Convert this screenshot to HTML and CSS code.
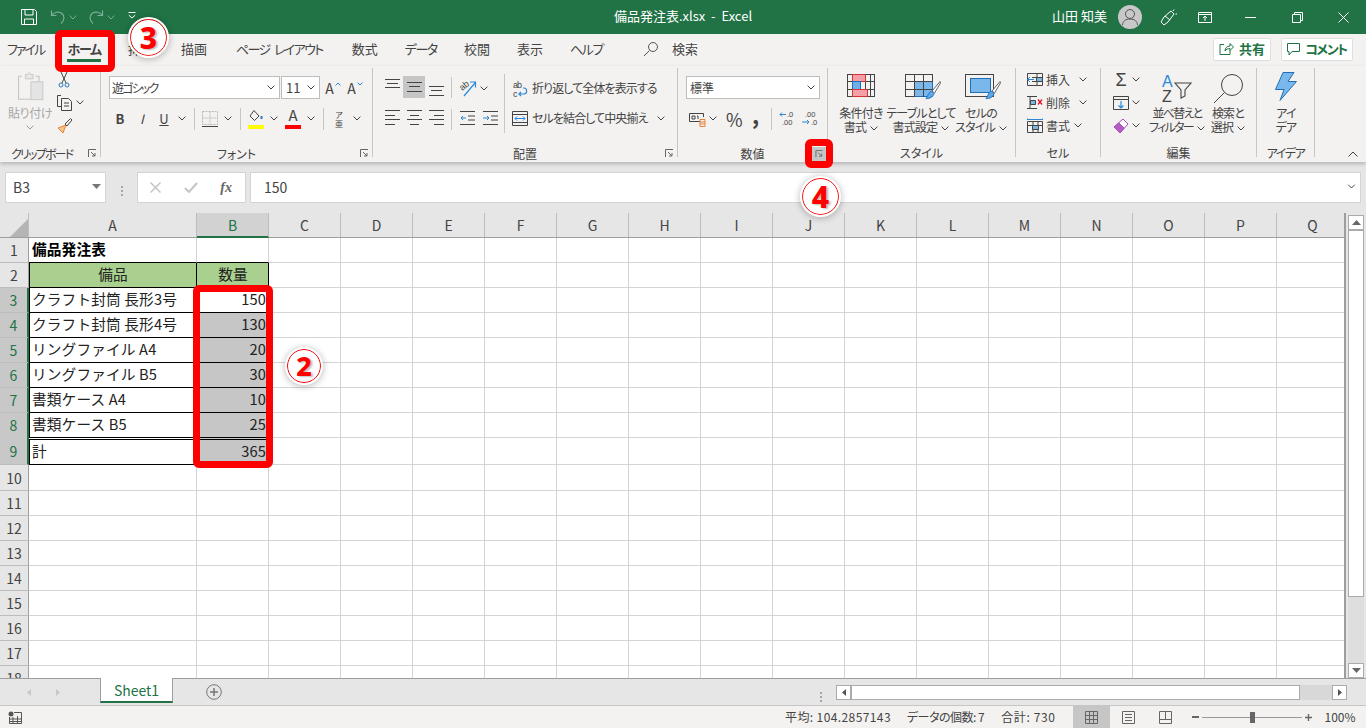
FILE: index.html
```html
<!DOCTYPE html>
<html lang="ja">
<head>
  <meta charset="UTF-8" />
  <title>備品発注表.xlsx - Excel</title>
  <link rel="stylesheet" href="styles.css">
</head>
<body>
  <svg class="defs" width="0" height="0">
    <symbol id="ch" viewBox="0 0 8 5"><path d="M.6.6 4 4 7.4.6" fill="none" stroke="#444"/></symbol>
    <symbol id="launch" viewBox="0 0 9 9"><path d="M.5 8V.5H8M3 3l4 4M7 4v3H4" fill="none" stroke="#666"/></symbol>
    <symbol id="brush" viewBox="0 0 16 20"><path d="M15 1.500 7 11l2.500 2L15.500 3z" fill="#fff" stroke="#666"/><path d="M6.500 11 9 13.500C8.500 16.500 5 19 .8 18.500 3 17 2.500 13 6.500 11z" fill="#5ea6e6" stroke="#2b79c2"/></symbol>
  </svg>

  <header class="titlebar">
    <div class="qat">
      <svg width="16" height="16" viewBox="0 0 16 16" fill="none" stroke="#fff"><path d="M.5.500h13l2 2v13H.5zM4 .500V6h8V.500M3.500 15.500V10h9v5.500"/></svg>
      <svg class="undo" width="16" height="16" viewBox="0 0 16 16" fill="none" stroke="#7fae98" stroke-width="1.200"><path d="M1.500 1.500v5h5M1.500 6.500C4 3 9 2 12 4.500s2.500 7-1 10"/></svg>
      <svg class="dimch" width="8" height="5" viewBox="0 0 8 5" fill="none" stroke="#7fae98"><path d="M.6.6 4 4 7.400.6"/></svg>
      <svg class="redo" width="16" height="16" viewBox="0 0 16 16" fill="none" stroke="#7fae98" stroke-width="1.200"><path d="M14.500 1.500v5h-5M14.500 6.500C12 3 7 2 4 4.500s-2.500 7 1 10"/></svg>
      <svg class="dimch" width="8" height="5" viewBox="0 0 8 5" fill="none" stroke="#7fae98"><path d="M.6.6 4 4 7.400.6"/></svg>
      <svg class="more" width="8" height="7" viewBox="0 0 8 7" fill="none" stroke="#fff"><path d="M.5.500h7M.8 3.200 4 6l3.200-2.800"/></svg>
    </div>
    <div class="doc-title">備品発注表.xlsx&nbsp; -&nbsp; Excel</div>
    <div class="winctl">
      <span class="user">山田 知美</span>
      <span class="avatar">
        <svg width="24" height="24" viewBox="0 0 24 24" fill="none" stroke="#555"><circle cx="12" cy="9" r="4.500"/><path d="M4.500 20c.5-4 3-6 7.500-6s7 2 7.500 6"/></svg>
      </span>
      <span class="ctl ctl-brush">
        <svg width="17" height="17" viewBox="0 0 17 17" fill="none" stroke="#fff"><path d="M11 2 14 5 8 13 4 16 1 13 4 8zM5 7l5 4M13 2l1-1.500M15.500 5H17"/></svg>
      </span>
      <span class="ctl ctl-disp">
        <svg width="14" height="11" viewBox="0 0 14 11" fill="none" stroke="#fff"><path d="M.5.500h13v10H.5zM.5 2.500h13M7 9V4.500M5 6l2-2 2 2"/></svg>
      </span>
      <span class="ctl ctl-win">
        <svg width="11" height="1" viewBox="0 0 11 1"><path d="M0 .5h11" stroke="#fff"/></svg>
      </span>
      <span class="ctl ctl-win ctl-max">
        <svg width="11" height="11" viewBox="0 0 11 11" fill="none" stroke="#fff"><path d="M.5 2.500h8v8h-8zM2.500 2.500v-2h8v8h-2"/></svg>
      </span>
      <span class="ctl ctl-win ctl-max">
        <svg width="11" height="11" viewBox="0 0 11 11" fill="none" stroke="#fff"><path d="m.5.500 10 10M10.500.5l-10 10"/></svg>
      </span>
    </div>
  </header>

  <nav class="tabs">
    <span class="tab kana tab-file">ファイル</span>
    <span class="tab tab-home">ホーム</span>
    <span class="tab">挿入</span>
    <span class="tab">描画</span>
    <span class="tab kana tab-wide tab-page">ページ レイアウト</span>
    <span class="tab tab-wide">数式</span>
    <span class="tab kana">データ</span>
    <span class="tab">校閲</span>
    <span class="tab">表示</span>
    <span class="tab kana">ヘルプ</span>
    <span class="search">
      <svg width="16" height="16" viewBox="0 0 16 16" fill="none" stroke="#555"><circle cx="10" cy="6" r="4.500"/><path d="M6.500 9.500 1 15"/></svg>
      <span class="search-text">検索</span>
    </span>
    <span class="tab-buttons">
      <span class="pill pill-share">
        <svg width="15" height="14" viewBox="0 0 15 14" fill="none" stroke="#217346"><path d="M5 2.500H1v10h10V8M6 9c0-3 2-5 5-5V1.500L14.500 5 11 8.500V6.500C8.500 6.500 7 7.500 6 9z"/></svg>
        共有
      </span>
      <span class="pill pill-comment">
        <svg width="13" height="13" viewBox="0 0 13 13" fill="none" stroke="#217346"><path d="M.5.500h12v8H5L2 12V8.500H.5z"/></svg>
        <span class="kana">コメント</span>
      </span>
    </span>
  </nav>

  <section class="ribbon">
    <div class="group g-clip">
      <div class="body">
        <div class="paste">
          <svg width="27" height="29" viewBox="0 0 30 34" fill="none" stroke="#c4c4c4"><path d="M5 5H1v27h14M21 5h4v6" stroke-width="1.300"/><path d="M9 3h2.500c0-2.500 4-2.500 4 0H18v5H9z" fill="#e6e6e6"/><rect x="15.500" y="11.500" width="14" height="21" fill="#e4e4e4"/></svg>
          <span class="paste-text">貼り付け</span>
          <svg class="pale" width="8" height="5"><use href="#ch"/></svg>
        </div>
        <div class="stack">
          <div class="small">
            <svg width="14" height="16" viewBox="0 0 14 16" fill="none" stroke="#444"><path d="M4 0l5 11M10 0 5 11"/><circle cx="4" cy="13" r="2" stroke="#2b79c2"/><circle cx="10" cy="13" r="2" stroke="#2b79c2"/></svg>
          </div>
          <div class="small">
            <svg width="16" height="16" viewBox="0 0 16 16" fill="none" stroke="#444"><path d="M4 .500H.5v11H5M4.500 3.500h7l3 3v9h-10zM7 8h5M7 11h5"/></svg>
            <svg width="8" height="5"><use href="#ch"/></svg>
          </div>
          <div class="small">
            <svg width="16" height="16" viewBox="0 0 16 16" fill="none"><path d="M9 7 1 10l5 5 3-8z" fill="#f7c38c" stroke="#e8833a"/><path d="M8 6l2 2 5-6-1.500-1.500z" stroke="#444"/></svg>
          </div>
        </div>
      </div>
      <div class="label"><span></span><span class="clip-text">クリップボード</span><svg class="launch" width="9" height="9"><use href="#launch"/></svg></div>
    </div>

    <div class="group g-font">
      <div class="body col">
        <div class="line">
          <span class="select font-name"><span class="kana-tight">遊ゴシック</span><svg width="8" height="5"><use href="#ch"/></svg></span>
          <span class="select font-size">11<svg width="8" height="5"><use href="#ch"/></svg></span>
          <span class="ib ib-a">A<svg class="caret" width="6" height="4" viewBox="0 0 6 4" fill="none" stroke="#2b88d8"><path d="M.5 3.500 3 1l2.500 2.500"/></svg></span>
          <span class="ib ib-a">A<svg class="caret" width="6" height="4" viewBox="0 0 6 4" fill="none" stroke="#2b88d8"><path d="M.5.500 3 3 5.500.5"/></svg></span>
        </div>
        <div class="line">
          <span class="ib ib-b">B</span>
          <span class="ib ib-i">I</span>
          <span class="ib ib-u">U</span>
          <span class="cs"><svg width="8" height="5"><use href="#ch"/></svg></span>
          <span class="sep sep-font"></span>
          <span class="ib">
            <svg width="16" height="16" viewBox="0 0 16 16" fill="none" stroke="#bbb" stroke-dasharray="2 1"><path d="M.5.500h15v13H.5zM8 .500v13M.5 7h15"/><path d="M0 15.500h16" stroke="#444" stroke-dasharray="none"/></svg>
          </span>
          <span class="cs"><svg width="8" height="5"><use href="#ch"/></svg></span>
          <span class="sep sep-font"></span>
          <span class="ib ib-fill">
            <svg width="14" height="12" viewBox="0 0 14 12" fill="none" stroke="#444"><path d="m5 .500 5 5.500-4.500 4.500L1 6z"/><path d="M12.500 6v3" stroke="#2b79c2" stroke-width="2"/></svg>
            <i class="bar bar-yellow"></i>
          </span>
          <span class="cs cs-tight"><svg width="8" height="5"><use href="#ch"/></svg></span>
          <span class="ib ib-color">A<i class="bar bar-red"></i></span>
          <span class="cs"><svg width="8" height="5"><use href="#ch"/></svg></span>
          <span class="sep sep-font"></span>
          <span class="ib ib-ph"><span>ア</span><span>亜</span></span>
          <span class="cs"><svg width="8" height="5"><use href="#ch"/></svg></span>
        </div>
      </div>
      <div class="label"><span></span><span>フォント</span><svg class="launch" width="9" height="9"><use href="#launch"/></svg></div>
    </div>

    <div class="group g-align">
      <div class="body al-body">
        <div class="al-col al-icons">
          <span class="ib"><svg width="15" height="22" viewBox="0 0 15 22" stroke="#444"><path d="M0 3.500h15M2 7.500h11M0 11.500h15"/></svg></span>
          <span class="ib ib-on"><svg width="15" height="22" viewBox="0 0 15 22" stroke="#444"><path d="M0 6.500h15M2 10.500h11M0 15.500h15"/></svg></span>
          <span class="ib"><svg width="15" height="22" viewBox="0 0 15 22" stroke="#444"><path d="M0 10.500h15M2 14.500h11M0 19.500h15"/></svg></span>
          <span class="ib"><svg width="15" height="15" viewBox="0 0 15 15" stroke="#444"><path d="M0 .5h15M0 5.500h10M0 9.500h15M0 14.500h10"/></svg></span>
          <span class="ib"><svg width="15" height="15" viewBox="0 0 15 15" stroke="#444"><path d="M0 .5h15M3 5.500h9M0 9.500h15M3 14.500h9"/></svg></span>
          <span class="ib"><svg width="15" height="15" viewBox="0 0 15 15" stroke="#444"><path d="M0 .5h15M5 5.500h10M0 9.500h15M5 14.500h10"/></svg></span>
        </div>
        <span class="sep-split"></span>
        <div class="al-col al-mid">
          <span class="rowline">
            <svg class="orient" width="18" height="18" viewBox="0 0 18 18" fill="none"><text x="1" y="10" transform="rotate(-40 5 8)" class="svgt">ab</text><path d="M5 17 16 4M11 3h5.500v5.500" stroke="#2b88d8" stroke-width="1.200"/></svg>
            <span class="cs"><svg width="8" height="5"><use href="#ch"/></svg></span>
          </span>
          <span class="rowline rowline-ind">
            <svg width="15" height="14" viewBox="0 0 15 14" fill="none" stroke="#444"><path d="M0 .500h15M8 5h7M8 9h7M0 13.500h15"/><path d="M6 7H1M3 5 1 7l2 2" stroke="#2b88d8"/></svg>
            <svg width="15" height="14" viewBox="0 0 15 14" fill="none" stroke="#444"><path d="M0 .500h15M8 5h7M8 9h7M0 13.500h15"/><path d="M0 7h6M4 5l2 2-2 2" stroke="#2b88d8"/></svg>
          </span>
        </div>
        <span class="sep sep-taller"></span>
        <div class="al-col al-wide">
          <span class="rowline rl-text">
            <svg class="wrap-ic" width="16" height="19" viewBox="0 0 16 19" fill="none"><text x="1" y="9" class="svgt">ab</text><text x="1" y="18" class="svgt">c</text><path d="M7 15h5c3.500 0 3.500-6 0-6h-1M9 13l-2 2 2 2" stroke="#2b88d8" stroke-width="1.200"/></svg>
            折り返して全体を表示する
          </span>
          <span class="rowline rl-text">
            <svg width="16" height="15" viewBox="0 0 16 15" fill="none" stroke="#444"><path d="M.5.500h15v14H.5zM.5 3.500h15M.5 11.500h15"/><path d="M3 7.500h10M5 5.500l-2 2 2 2M11 5.500l2 2-2 2" stroke="#2b88d8"/></svg>
            セルを結合して中央揃え
            <svg class="rl-ch" width="8" height="5"><use href="#ch"/></svg>
          </span>
        </div>
      </div>
      <div class="label"><span></span><span>配置</span><svg class="launch" width="9" height="9"><use href="#launch"/></svg></div>
    </div>

    <div class="group g-num">
      <div class="body col">
        <div class="line">
          <span class="select num-format">標準<svg width="8" height="5"><use href="#ch"/></svg></span>
        </div>
        <div class="line num-line">
          <svg width="17" height="16" viewBox="0 0 17 16" fill="none" stroke="#444"><path d="M.5 2.500h14V6M11 10.500H.5v-8M3 5h3v3H3zM8 5h1v3"/><path d="M11 8.500h5v7h-5zM11 11h5M11 13h5" stroke="#e8833a"/></svg>
          <span class="cs"><svg width="8" height="5"><use href="#ch"/></svg></span>
          <span class="pct">%</span>
          <span class="comma">,</span>
          <span class="sep sep-num"></span>
          <svg width="18" height="17" viewBox="0 0 18 17" fill="none"><path d="M7 4.500H1M3 2.500l-2 2 2 2" stroke="#2b88d8"/><text x="8" y="7" class="svgt svgt-s">.0</text><text x="3" y="15.400" class="svgt svgt-s">.00</text></svg>
          <svg class="dec2" width="19" height="17" viewBox="0 0 19 17" fill="none"><text x="4" y="7" class="svgt svgt-s">.00</text><path d="M1 12h7M6 10l2 2-2 2" stroke="#2b88d8"/><text x="10" y="15.400" class="svgt svgt-s">.0</text></svg>
        </div>
      </div>
      <div class="label"><span></span><span>数値</span><svg class="launch launch-on" width="15" height="14"><use href="#launch"/></svg></div>
    </div>

    <div class="group g-style">
      <div class="body big-row">
        <div class="big big-1">
          <span class="big-ic">
            <svg width="28" height="23" viewBox="0 0 28 23" fill="none" stroke="#444"><rect x=".5" y=".5" width="27" height="22"/><path d="M5.500 0v23M18.500 0v23M23.500 0v23M0 7.500h28M0 15.500h28"/><rect x="5.500" y=".5" width="13" height="7" fill="#f4a0a6" stroke="#d13438"/><rect x="5.500" y="7.500" width="8" height="8" fill="#6db1e8" stroke="#1e6fb8"/><rect x="5.500" y="15.500" width="15" height="7" fill="#f4a0a6" stroke="#d13438"/></svg>
          </span>
          <span>条件付き</span><span>書式<svg class="inl" width="8" height="5"><use href="#ch"/></svg></span>
        </div>
        <div class="big big-2">
          <span class="big-ic">
            <svg class="tbl" width="30" height="26" viewBox="0 0 30 26" fill="none" stroke="#444"><rect x=".5" y=".5" width="27" height="22"/><rect x="9.500" y="7.500" width="18" height="15" fill="#7ab8ec" stroke="#1e6fb8"/><path d="M0 7.500h28M0 15.500h28M9.500 0v23M18.500 0v23"/></svg>
            <svg class="brush" width="16" height="20"><use href="#brush"/></svg>
          </span>
          <span>テーブルとして</span><span>書式設定<svg class="inl" width="8" height="5"><use href="#ch"/></svg></span>
        </div>
        <div class="big big-3">
          <span class="big-ic">
            <svg class="tbl" width="30" height="26" viewBox="0 0 30 26" fill="none" stroke="#444"><rect x=".5" y=".5" width="28" height="22"/><rect x="5.500" y="4.500" width="20" height="14" fill="#7ab8ec" stroke="#1e6fb8"/></svg>
            <svg class="brush" width="16" height="20"><use href="#brush"/></svg>
          </span>
          <span>セルの</span><span>スタイル<svg class="inl" width="8" height="5"><use href="#ch"/></svg></span>
        </div>
      </div>
      <div class="label label-plain">スタイル</div>
    </div>

    <div class="group g-cells">
      <div class="body stack cell-stack">
        <div class="small">
          <svg width="16" height="13" viewBox="0 0 16 13" fill="none" stroke="#444"><path d="M.5.500h15v12H.5zM5 4.500h11M5 8.500h11M10 0v13"/><path d="M9.500 4.500h6v4h-6z" fill="#7ab8ec"/><path d="M7 6.500H1M3 4l-2.500 2.500L3 9" stroke="#2b88d8"/></svg>
          <span class="small-text">挿入</span><svg width="8" height="5"><use href="#ch"/></svg>
        </div>
        <div class="small">
          <svg width="16" height="13" viewBox="0 0 16 13" fill="none" stroke="#444"><path d="M0 .5h10M0 12.500h10M3 0v13"/><path d="M3.500 4.500h5v4h-5z" fill="#7ab8ec"/><path d="m11 3.500 4 5M15 3.500l-4 5" stroke="#e81123" stroke-width="1.300"/></svg>
          <span class="small-text">削除</span><svg width="8" height="5"><use href="#ch"/></svg>
        </div>
        <div class="small">
          <svg width="16" height="15" viewBox="0 0 16 15" fill="none" stroke="#444"><path d="M.5 3.500h15v11H.5zM6 3v12M11 3v12M0 7.500h16"/><path d="M5.500 7.500h6v4h-6z" fill="#7ab8ec"/><path d="M.5.500v1.500M.5 1.500h15M15.500.5v1.500" stroke="#2b88d8"/></svg>
          <span class="small-text">書式</span><svg class="ch-near" width="8" height="5"><use href="#ch"/></svg>
        </div>
      </div>
      <div class="label label-plain">セル</div>
    </div>

    <div class="group g-edit">
      <div class="body edit-body">
        <div class="stack edit-stack">
          <div class="small"><span class="sigma">Σ</span><svg width="8" height="5"><use href="#ch"/></svg></div>
          <div class="small">
            <svg width="16" height="14" viewBox="0 0 16 14" fill="none" stroke="#444"><path d="M.5.500h15v13H.5zM.5 3.500h15"/><path d="M8 5v7M5.500 9.500 8 12l2.500-2.500" stroke="#2b88d8" stroke-width="1.200"/></svg>
            <svg width="8" height="5"><use href="#ch"/></svg>
          </div>
          <div class="small">
            <svg width="16" height="16" viewBox="0 0 16 16" fill="none" stroke="#a74db8"><path d="M10 1 15 6 7 15 1 9z" fill="#fff"/><path d="M6 5 1 9l6 6 4-5z" fill="#b45cc4"/></svg>
            <svg width="8" height="5"><use href="#ch"/></svg>
          </div>
        </div>
        <div class="big big-sort">
          <span class="big-ic">
            <svg width="30" height="30" viewBox="0 0 30 30" fill="none"><text x="0" y="13" class="az az-a">A</text><text x="0" y="28" class="az">Z</text><path d="M13 9h16l-6 7v6l-4 2v-8z" stroke="#444" stroke-width="1.100"/></svg>
          </span>
          <span>並べ替えと</span><span>フィルター<svg class="inl" width="8" height="5"><use href="#ch"/></svg></span>
        </div>
        <div class="big big-find">
          <span class="big-ic">
            <svg width="30" height="30" viewBox="0 0 30 30" fill="none" stroke="#444"><circle cx="19" cy="11" r="10.500"/><path d="M11.500 18.500 1 29"/></svg>
          </span>
          <span>検索と</span><span>選択<svg class="inl" width="8" height="5"><use href="#ch"/></svg></span>
        </div>
      </div>
      <div class="label label-plain">編集</div>
    </div>

    <div class="group g-idea">
      <div class="body big-row">
        <div class="big big-idea">
          <span class="big-ic">
            <svg width="22" height="29" viewBox="0 0 22 29" fill="#7ab8ec" stroke="#1e6fb8"><path d="M8 .500h11L13 9.500h8.500L5 28.500l4-11H.5z"/></svg>
          </span>
          <span>アイ</span><span>デア</span>
        </div>
      </div>
      <div class="label label-plain idea-label">アイデア</div>
    </div>

    <div class="collapse">
      <svg width="10" height="6" viewBox="0 0 10 6" fill="none" stroke="#444"><path d="M.5 5.500 5 1l4.500 4.500"/></svg>
    </div>
  </section>

  <section class="formula">
    <div class="namebox">B3<svg width="9" height="5" viewBox="0 0 9 5"><path d="M0 0h9L4.500 5z" fill="#777"/></svg></div>
    <div class="dots"><i></i><i></i><i></i></div>
    <div class="fxbox">
      <svg width="11" height="11" viewBox="0 0 11 11" stroke="#c4c4c4" stroke-width="1.500" fill="none"><path d="m.5.500 10 10M10.500.5l-10 10"/></svg>
      <svg width="14" height="11" viewBox="0 0 14 11" stroke="#c4c4c4" stroke-width="2" fill="none"><path d="m1 6 4 4 8-9"/></svg>
      <span class="fx">fx</span>
    </div>
    <div class="fxinput">150<svg width="9" height="5" viewBox="0 0 8 5"><use href="#ch"/></svg></div>
  </section>

  <section class="sheet">
    <div class="grid">
      <div class="colheads">
        <div class="corner"><svg width="18" height="18" viewBox="0 0 18 18"><path d="M18 0v18H0z" fill="#b4b4b4"/></svg></div>
        <div class="ch-a">A</div><div class="ch-b">B</div>
        <div>C</div><div>D</div><div>E</div><div>F</div><div>G</div><div>H</div><div>I</div><div>J</div><div>K</div><div>L</div><div>M</div><div>N</div><div>O</div><div>P</div><div>Q</div>
      </div>

      <div class="row"><div class="rh">1</div><div class="c ub title-cell">備品発注表</div><div class="c ub"></div><div class="rest"></div></div>
      <div class="row"><div class="rh">2</div><div class="c bd head-cell">備品</div><div class="c bd head-cell">数量</div><div class="rest"></div></div>
      <div class="row"><div class="rh on">3</div><div class="c bd">クラフト封筒 長形3号</div><div class="c bd num">150</div><div class="rest"></div></div>
      <div class="row"><div class="rh on">4</div><div class="c bd">クラフト封筒 長形4号</div><div class="c bd num sel">130</div><div class="rest"></div></div>
      <div class="row"><div class="rh on">5</div><div class="c bd">リングファイル A4</div><div class="c bd num sel">20</div><div class="rest"></div></div>
      <div class="row"><div class="rh on">6</div><div class="c bd">リングファイル B5</div><div class="c bd num sel">30</div><div class="rest"></div></div>
      <div class="row"><div class="rh on">7</div><div class="c bd">書類ケース A4</div><div class="c bd num sel">10</div><div class="rest"></div></div>
      <div class="row"><div class="rh on">8</div><div class="c bd">書類ケース B5</div><div class="c bd num sel">25</div><div class="rest"></div></div>
      <div class="row row-total"><div class="rh on">9</div><div class="c bd tot">計</div><div class="c bd tot num sel">365</div><div class="rest"></div></div>
      <div class="row row-10"><div class="rh">10</div><div class="c"></div><div class="c"></div><div class="rest"></div></div>
      <div class="row"><div class="rh">11</div><div class="c"></div><div class="c"></div><div class="rest"></div></div>
      <div class="row"><div class="rh">12</div><div class="c"></div><div class="c"></div><div class="rest"></div></div>
      <div class="row"><div class="rh">13</div><div class="c"></div><div class="c"></div><div class="rest"></div></div>
      <div class="row"><div class="rh">14</div><div class="c"></div><div class="c"></div><div class="rest"></div></div>
      <div class="row"><div class="rh">15</div><div class="c"></div><div class="c"></div><div class="rest"></div></div>
      <div class="row"><div class="rh">16</div><div class="c"></div><div class="c"></div><div class="rest"></div></div>
      <div class="row"><div class="rh">17</div><div class="c"></div><div class="c"></div><div class="rest"></div></div>
      <div class="row"><div class="rh">18</div><div class="c"></div><div class="c"></div><div class="rest"></div></div>
    </div>
    <div class="vscroll">
      <span class="sbtn"><svg width="9" height="5" viewBox="0 0 9 5"><path d="M0 5h9L4.500 0z" fill="#666"/></svg></span>
      <span class="vthumb"></span>
      <span class="vtrack"></span>
      <span class="sbtn"><svg width="9" height="5" viewBox="0 0 9 5"><path d="M0 0h9L4.500 5z" fill="#666"/></svg></span>
    </div>
  </section>

  <section class="sheetbar">
    <span class="nav-arrows">
      <svg width="4" height="7" viewBox="0 0 4 7"><path d="M4 0v7L0 3.500z" fill="#c8c8c8"/></svg>
      <svg width="4" height="7" viewBox="0 0 4 7"><path d="M0 0v7l4-3.500z" fill="#c8c8c8"/></svg>
    </span>
    <span class="sheet-tab">Sheet1</span>
    <span class="add-sheet">
      <svg width="16" height="16" viewBox="0 0 16 16" fill="none" stroke="#777"><circle cx="8" cy="8" r="7.300"/><path d="M8 4v8M4 8h8" stroke-width="1.500"/></svg>
    </span>
    <div class="dots dots-h"><i></i><i></i><i></i></div>
    <div class="hscroll">
      <span class="sbtn sbtn-h"><svg width="4" height="7" viewBox="0 0 4 7"><path d="M4 0v7L0 3.500z" fill="#555"/></svg></span>
      <span class="hthumb"></span>
      <span class="htrack"></span>
      <span class="sbtn sbtn-h"><svg width="4" height="7" viewBox="0 0 4 7"><path d="M0 0v7l4-3.500z" fill="#555"/></svg></span>
    </div>
  </section>

  <footer class="status">
    <svg class="macro" width="14" height="13" viewBox="0 0 14 13" fill="none"><circle cx="3" cy="3" r="2.500" fill="#555"/><path d="M6 1.500h7.500v11H1.500V6M1.500 8h12M1.500 10.500h12M5 6v6.500M9.500 5v7.500" stroke="#555"/></svg>
    <span class="stat stat-avg">平均: 104.2857143</span>
    <span class="stat stat-count">データの個数: 7</span>
    <span class="stat stat-sum">合計: 730</span>
    <span class="view view-on">
      <svg width="13" height="13" viewBox="0 0 13 13" fill="none" stroke="#666"><path d="M.5.500h12v12H.5zM4.500 0v13M8.500 0v13M0 4.500h13M0 8.500h13"/></svg>
    </span>
    <span class="view">
      <svg width="13" height="13" viewBox="0 0 13 13" fill="none" stroke="#666"><path d="M.5.500h12v12H.5zM3 3.500h7M3 6.500h7M3 9.500h7"/></svg>
    </span>
    <span class="view">
      <svg width="13" height="13" viewBox="0 0 13 13" fill="none" stroke="#666"><path d="M.5.500h12v12H.5zM6.500 0v8.500M.5 8.500h12"/></svg>
    </span>
    <span class="zoom">
      <i class="zm-minus"></i>
      <span class="zm-track"><i class="zm-thumb"></i></span>
      <svg width="7" height="7" viewBox="0 0 7 7" stroke="#666" stroke-width="1.400"><path d="M3.500 0v7M0 3.500h7"/></svg>
    </span>
    <span class="stat stat-zoom">100%</span>
  </footer>

  <!-- 赤枠と丸数字はスクリーンショットに載せた注釈 -->
  <div class="mark mark-home"></div>
  <div class="mark mark-launch"></div>
  <div class="mark mark-range"></div>
  <div class="num-badge badge-3">3</div>
  <div class="num-badge badge-2">2</div>
  <div class="num-badge badge-4">4</div>
</body>
</html>
```

FILE: styles.css
```css
* {
  box-sizing: border-box;
}

body {
  position: relative;
  margin: 0;
  width: 1366px;
  height: 728px;
  overflow: hidden;
  display: flex;
  flex-direction: column;
  background-color: #e6e6e6;
  color: #444;
  font-family: "Noto Sans CJK JP", sans-serif;
  font-size: 12px;
  font-feature-settings: "palt";
  line-height: 14px;
}

.defs {
  position: absolute;
}

svg {
  display: block;
  flex: none;
}

/* title bar */
.titlebar {
  flex: none;
  height: 34px;
  display: grid;
  grid-template-columns: 1fr auto 1fr;
  align-items: center;
  background-color: #217346;
  color: #fff;
}

.qat {
  display: flex;
  align-items: center;
  padding-left: 21px;
}

.undo {
  margin-left: 13px;
}

.redo {
  margin-left: 11px;
}

.dimch {
  margin-left: 3px;
}

.more {
  margin: -3px 0 0 13px;
}

.doc-title {
  margin-top: -3px;
  font-size: 13px;
  font-feature-settings: normal;
}

.winctl {
  display: flex;
  align-items: center;
  justify-content: flex-end;
}

.user {
  margin-top: -3px;
  font-size: 13px;
  margin-right: 11px;
}

.avatar {
  width: 24px;
  height: 24px;
  border-radius: 50%;
  background-color: #c8c8c8;
  margin-right: 10px;
}

.ctl {
  display: flex;
  justify-content: center;
  width: 32px;
}

.ctl-disp {
  width: 42px;
}

.ctl-win {
  width: 48px;
}

.ctl-max {
  width: 46px;
}

/* tabs */
.tabs {
  flex: none;
  height: 32px;
  display: flex;
  align-items: center;
  gap: 27px;
  padding: 0 13px 2px 7px;
  background-color: #f3f2f1;
  font-size: 13px;
}

.kana {
  letter-spacing: -1.4px;
}

.tab-file {
  letter-spacing: -1.9px;
}

.tab-home {
  position: relative;
  margin-left: -4px;
  font-weight: 700;
  letter-spacing: -1.2px;
}

.tab-home::after {
  content: "";
  position: absolute;
  left: 0;
  right: 0;
  top: 17px;
  height: 3px;
  background-color: #217346;
}

.tab-wide {
  margin-left: 2px;
}

.tab-page {
  letter-spacing: -1.6px;
  word-spacing: 3px;
}

.search {
  display: flex;
  align-items: center;
  gap: 13px;
  margin-left: 13px;
}

.search-text {
  background-color: #f9f8f7;
}

.tab-buttons {
  display: flex;
  gap: 10px;
  margin-left: auto;
}

.pill {
  height: 23px;
  display: flex;
  align-items: center;
  justify-content: center;
  gap: 5px;
  border: 1px solid #e1dfdd;
  border-radius: 2px;
  background-color: #fff;
  color: #217346;
  font-weight: 700;
}

.pill-share {
  width: 58px;
}

.pill-comment {
  width: 72px;
}

/* ribbon */
.ribbon {
  position: relative;
  z-index: 1;
  flex: none;
  height: 96px;
  display: flex;
  padding: 2px 0 5px;
  background-color: #f3f2f1;
  box-shadow: 0 2px 4px rgba(0, 0, 0, .22);
}

.group {
  flex: none;
  display: flex;
  flex-direction: column;
  border-right: 1px solid #c8c6c4;
}

.g-clip { width: 101px; }
.g-font { width: 272px; }
.g-align { width: 305px; }
.g-num { width: 150px; }
.g-style { width: 188px; }
.g-cells { width: 85px; }
.g-edit { width: 156px; }
.g-idea { width: 58px; }

.body {
  flex: 1;
  display: flex;
  min-height: 0;
}

.col {
  flex-direction: column;
  gap: 8px;
  padding: 8px 0 0 8px;
}

.line {
  display: flex;
  align-items: center;
  height: 23px;
}

.label {
  flex: none;
  height: 15px;
  margin-bottom: -4px;
  display: grid;
  grid-template-columns: 1fr auto 1fr;
  align-items: center;
  text-align: center;
  white-space: nowrap;
}

.label-plain {
  display: block;
}

.g-clip .label {
  grid-template-columns: 11px auto 1fr;
}

.clip-text {
  letter-spacing: -1.8px;
}

.idea-label {
  letter-spacing: -1.5px;
}

.launch {
  justify-self: end;
  margin-right: 3px;
}

.launch-on {
  margin-right: 0;
  padding: 3px;
  background-color: #c6c6c6;
}

.ib {
  position: relative;
  width: 22px;
  height: 22px;
  flex: none;
  display: flex;
  align-items: center;
  justify-content: center;
}

.ib-on {
  background-color: #c6c6c6;
}

.cs {
  width: 14px;
  flex: none;
  display: flex;
  justify-content: center;
}

.cs-tight {
  margin-right: 1px;
}

.sep {
  flex: none;
  width: 1px;
  background-color: #c8c6c4;
}

.sep-font {
  height: 22px;
  margin: 0 4px 0 5px;
}

.select {
  height: 23px;
  display: flex;
  align-items: center;
  justify-content: space-between;
  padding: 0 4px;
  background-color: #fff;
  border: 1px solid #bdbdbd;
  flex: none;
}

.font-name {
  width: 171px;
  margin-right: 1px;
  padding-left: 2px;
}

.kana-tight {
  letter-spacing: -1.8px;
}

.font-size {
  width: 39px;
  font-size: 13px;
}

.num-format {
  width: 134px;
  padding-left: 3px;
}

.ib-a {
  font-size: 14px;
}

.font-size + .ib-a {
  margin-left: 2px;
}

.caret {
  margin: -8px 0 0 1px;
}

.ib-b {
  font-weight: 700;
  font-size: 13px;
}

.ib-i {
  font-style: italic;
  font-size: 13px;
}

.ib-u {
  font-size: 13px;
  text-decoration: underline;
}

.bar {
  position: absolute;
  left: 3px;
  bottom: 1px;
  width: 16px;
  height: 4px;
}

.bar-yellow { background-color: #ffff00; }
.bar-red { background-color: #ff0000; }

.ib-fill {
  align-items: flex-start;
  padding-top: 2px;
}

.ib-color {
  align-items: flex-start;
  font-size: 15px;
}

.ib-ph {
  flex-direction: column;
  line-height: 9px;
  font-size: 8px;
}

.svgt {
  fill: #444;
  stroke: none;
  font-family: "Liberation Sans", sans-serif;
  font-size: 9px;
}

.svgt-s {
  font-size: 7.5px;
}

/* clipboard */
.paste {
  width: 44px;
  margin-left: 8px;
  padding-top: 4px;
  display: flex;
  flex-direction: column;
  align-items: center;
  color: #a6a6a6;
  white-space: nowrap;
}

.paste-text {
  margin: 5px 0;
  letter-spacing: -.4px;
}

.pale {
  opacity: .5;
}

.stack {
  display: flex;
  flex-direction: column;
  padding-left: 5px;
}

.small {
  height: 23px;
  display: flex;
  align-items: center;
  gap: 3px;
  white-space: nowrap;
}

/* alignment */
.al-body {
  padding: 8px 0 0 8px;
  align-items: flex-start;
}

.al-col {
  display: flex;
  flex: none;
}

.al-icons {
  width: 66px;
  flex-wrap: wrap;
  row-gap: 8px;
}

.sep-split {
  flex: none;
  width: 1px;
  height: 54px;
  margin: 0 6px 0 4px;
  background:
    linear-gradient(#c8c6c4, #c8c6c4) 0 1px / 1px 21px no-repeat,
    linear-gradient(#c8c6c4, #c8c6c4) 0 33px / 1px 21px no-repeat;
}

.al-mid {
  width: 46px;
  flex-direction: column;
  gap: 10px;
  padding-top: 2px;
}

.rowline {
  display: flex;
  align-items: center;
  height: 20px;
}

.orient {
  margin-left: 1px;
}

.rowline-ind {
  gap: 8px;
  margin-left: 2px;
}

.sep-taller {
  height: 59px;
  margin: -2px 6px 0 0;
}

.al-wide {
  flex-direction: column;
  gap: 10px;
  padding-top: 2px;
  margin-left: 1px;
}

.rl-text {
  gap: 4px;
  letter-spacing: -.9px;
  white-space: nowrap;
}

.rl-ch {
  margin-left: 5px;
}

/* number */
.num-line {
  margin-left: 3px;
}

.pct {
  margin-left: 6px;
  font-size: 18px;
  width: 18px;
}

.comma {
  margin: -10px 0 0 8px;
  width: 13px;
  font-size: 22px;
  font-weight: 700;
  line-height: 12px;
}

.sep-num {
  height: 22px;
  margin: 0 7px 0 6px;
}

.dec2 {
  margin-left: 4px;
}

/* big buttons */
.big-row {
  padding-left: 7px;
}

.big {
  flex: none;
  display: flex;
  flex-direction: column;
  align-items: center;
  letter-spacing: -.8px;
  white-space: nowrap;
}

.big-ic {
  position: relative;
  height: 38px;
  display: block;
  padding-top: 6px;
}

.big-1 { width: 52px; }
.big-2 { width: 68px; }
.big-3 { width: 52px; }

.brush {
  position: absolute;
  right: -4px;
  top: 12px;
}

.inl {
  display: inline-block;
  margin-left: 4px;
  vertical-align: middle;
}

.tbl {
  margin-right: 2px;
}

/* cells, editing */
.cell-stack {
  padding-left: 11px;
}

.small-text {
  width: 30px;
}

.ch-near {
  margin-left: -5px;
}

.edit-body {
  align-items: flex-start;
}

.edit-stack {
  width: 46px;
  padding-left: 12px;
}

.sigma {
  width: 16px;
  font-size: 18px;
  font-family: "Liberation Sans", sans-serif;
  text-align: center;
}

.big-sort {
  width: 60px;
  letter-spacing: -1.7px;
}

.big-find {
  width: 44px;
  margin-left: -1px;
}

.az {
  fill: #444;
  font-size: 16px;
  font-family: "Liberation Sans", sans-serif;
}

.az-a {
  fill: #2b88d8;
}

.big-idea {
  width: 44px;
}

.g-idea .big-ic {
  padding-top: 4px;
}

.collapse {
  flex: 1;
  display: flex;
  justify-content: flex-end;
  align-items: flex-end;
  padding: 0 8px 0 0;
}

/* formula bar */
.formula {
  flex: none;
  height: 51px;
  padding-top: 10px;
  display: flex;
  align-items: flex-start;
  font-size: 14px;
  font-feature-settings: normal;
}

.namebox,
.fxbox,
.fxinput {
  height: 31px;
  display: flex;
  align-items: center;
  padding-bottom: 2px;
  background-color: #fff;
  border: 1px solid #d4d4d4;
}

.namebox {
  width: 101px;
  margin-left: 5px;
  padding: 0 4px 2px 7px;
  justify-content: space-between;
}

.dots {
  display: flex;
  flex-direction: column;
  gap: 2px;
  align-self: center;
  width: 31px;
  align-items: center;
  margin-top: -4px;
}

.dots i {
  width: 2px;
  height: 2px;
  background-color: #a6a6a6;
}

.fxbox {
  width: 109px;
  justify-content: space-between;
  padding: 0 13px 0 12px;
}

.fx {
  font-family: "Liberation Serif", serif;
  font-style: italic;
  font-weight: 700;
  color: #666;
}

.fxinput {
  width: 1111px;
  margin-left: 4px;
  padding: 0 4px 2px 13px;
  justify-content: space-between;
}

/* sheet */
.sheet {
  flex: 1;
  min-height: 0;
  display: flex;
  font-size: 14.67px;
  font-feature-settings: normal;
  line-height: 18px;
}

.grid {
  width: 1346px;
  flex: none;
  overflow: hidden;
  background-color: #fff;
  border-right: 2px solid #9e9e9e;
}

.colheads {
  height: 25px;
  display: grid;
  grid-template-columns: 29px 168px repeat(16, 72px);
  background-color: #e6e6e6;
  border-bottom: 1px solid #9e9e9e;
  font-size: 14px;
}

.colheads > div {
  display: flex;
  align-items: center;
  justify-content: center;
  border-right: 1px solid #bdbdbd;
}

.corner {
  padding-left: 9px;
  padding-top: 6px;
}

.colheads .ch-b {
  background-color: #d2d2d2;
  color: #217346;
  border-bottom: 2px solid #217346;
  margin-bottom: -1px;
}

.row {
  height: 25px;
  display: grid;
  grid-template-columns: 29px 168px 72px 1fr;
}

.rh {
  display: flex;
  align-items: center;
  justify-content: center;
  background-color: #e6e6e6;
  border-right: 1px solid #9e9e9e;
  border-bottom: 1px solid #bdbdbd;
  font-size: 14px;
}

.rh.on {
  background-color: #c8c8c8;
  color: #217346;
  border-right: 2px solid #217346;
}

.c {
  display: flex;
  align-items: center;
  padding: 0 2px 2px 3px;
  border-right: 1px solid #d4d4d4;
  border-bottom: 1px solid #d4d4d4;
  letter-spacing: .15px;
  white-space: nowrap;
  color: #222;
}

.ub {
  border-bottom-color: #000;
}

.bd {
  border-right-color: #000;
  border-bottom-color: #000;
}

.row > .bd:nth-child(2) {
  box-shadow: inset 1px 0 0 #000;
}

.title-cell {
  font-weight: 700;
  color: #000;
}

.head-cell {
  justify-content: center;
  background-color: #a9d08e;
}

.num {
  justify-content: flex-end;
}

.sel {
  background-color: #c6c6c6;
}

.rest {
  border-bottom: 1px solid #d4d4d4;
  background-image: repeating-linear-gradient(to right, transparent 0 71px, #d4d4d4 71px 72px);
}

.row-total {
  height: 28px;
  margin-top: -1px;
}

.tot {
  border-top: 3px double #000;
}

.row-10 {
  height: 26px;
}

/* scrollbars */
.vscroll {
  flex: 1;
  display: flex;
  flex-direction: column;
  padding: 2px 2px 0;
}

.sbtn {
  flex: none;
  display: flex;
  align-items: center;
  justify-content: center;
  width: 16px;
  height: 15px;
  background-color: #fff;
  border: 1px solid #ababab;
}

.vthumb {
  flex: none;
  height: 367px;
  background-color: #fff;
  border: 1px solid #ababab;
}

.vtrack {
  flex: 1;
  background-color: #dedede;
}

.sheetbar {
  flex: none;
  height: 28px;
  display: flex;
  align-items: flex-start;
  background-color: #e6e6e6;
  border-top: 1px solid #9e9e9e;
  border-bottom: 1px solid #c6c6c6;
}

.nav-arrows {
  width: 100px;
  display: flex;
  gap: 25px;
  padding: 10px 0 0 27px;
}

.sheet-tab {
  width: 73px;
  height: 25px;
  margin-top: -1px;
  padding-top: 5px;
  text-align: center;
  background-color: #fff;
  border-left: 1px solid #9e9e9e;
  border-right: 1px solid #9e9e9e;
  border-bottom: 2px solid #217346;
  color: #217346;
  font-size: 14px;
  font-feature-settings: normal;
}

.add-sheet {
  margin: 5px 0 0 33px;
}

.dots-h {
  margin: 9px 0 0 595px;
  width: 7px;
}

.hscroll {
  display: flex;
  margin: 6px 0 0 12px;
}

.sbtn-h {
  width: 15px;
}

.hthumb {
  width: 449px;
  height: 15px;
  background-color: #fff;
  border: 1px solid #ababab;
}

.htrack {
  width: 32px;
  height: 15px;
  background-color: #d8d8d8;
}

/* status bar */
.status {
  flex: none;
  height: 22px;
  display: flex;
  align-items: center;
  background-color: #f3f2f1;
  padding-left: 8px;
}

.stat {
  white-space: nowrap;
}

.stat-avg {
  margin-left: 763px;
  letter-spacing: .4px;
}

.stat-count {
  margin-left: 16px;
  letter-spacing: -.5px;
}

.stat-sum {
  margin-left: 17px;
  letter-spacing: .6px;
}

.view {
  width: 37px;
  height: 22px;
  flex: none;
  display: flex;
  align-items: center;
  justify-content: center;
}

.view-on {
  background-color: #c6c6c6;
  margin-left: 18px;
}

.zoom {
  display: flex;
  align-items: center;
  gap: 3px;
  margin-left: 8px;
}

.zm-minus {
  width: 7px;
  height: 2px;
  background-color: #666;
}

.zm-track {
  position: relative;
  width: 100px;
  height: 1px;
  background-color: #999;
}

.zm-thumb {
  position: absolute;
  left: 48px;
  top: -5px;
  width: 5px;
  height: 11px;
  background-color: #666;
}

.stat-zoom {
  margin-left: 12px;
}

/* annotations */
.mark {
  position: absolute;
  z-index: 5;
  border: 7px solid #ff0000;
  border-radius: 6px;
}

.mark-home {
  left: 55px;
  top: 30px;
  width: 60px;
  height: 42px;
}

.mark-launch {
  left: 805px;
  top: 139px;
  width: 28px;
  height: 29px;
}

.mark-range {
  left: 193px;
  top: 285px;
  width: 80px;
  height: 183px;
}

.num-badge {
  position: absolute;
  z-index: 6;
  width: 37px;
  height: 37px;
  display: flex;
  align-items: center;
  justify-content: center;
  border-radius: 50%;
  background-color: #fff;
  border: 1px solid #ff0000;
  outline: 2px solid #fff;
  box-shadow: 0 1px 6px 3px rgba(0, 0, 0, .22);
  color: #ff0000;
  font-family: "Noto Sans", sans-serif;
  font-size: 30px;
  font-weight: 800;
  text-shadow: 2px 1px 2px #bbb;
}

.badge-3 {
  left: 130px;
  top: 19px;
}

.badge-2 {
  left: 287px;
  top: 349px;
  width: 34px;
  height: 34px;
  font-size: 27px;
}

.badge-4 {
  left: 802px;
  top: 178px;
}
```
